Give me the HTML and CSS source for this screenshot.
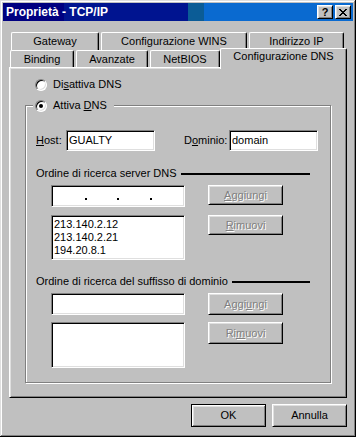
FILE: index.html
```html
<!DOCTYPE html>
<html lang="it">
<head>
  <meta charset="UTF-8">
  <title>Proprietà - TCP/IP</title>
  <link rel="stylesheet" href="styles.css">
</head>
<body>
  <div class="window">
    <div class="titlebar">
      <span class="title">Proprietà - TCP/IP</span>
      <div class="title-buttons">
        <div class="tbtn help">?</div>
        <div class="tbtn">
          <svg width="8" height="7" viewBox="0 0 8 7" shape-rendering="crispEdges">
            <path d="M0 0h2v1h-2zM6 0h2v1h-2zM1 1h2v1h-2zM5 1h2v1h-2zM2 2h4v1h-4zM3 3h2v1h-2zM2 4h4v1h-4zM1 5h2v1h-2zM5 5h2v1h-2zM0 6h2v1h-2zM6 6h2v1h-2z" fill="#000"/>
          </svg>
        </div>
      </div>
    </div>

    <div class="tabs">
      <div class="tabrow back">
        <div class="tab t-gateway">Gateway</div>
        <div class="tab t-wins">Configurazione WINS</div>
        <div class="tab t-ip">Indirizzo IP</div>
      </div>
      <div class="tabrow front">
        <div class="tab t-binding">Binding</div>
        <div class="tab t-avanzate">Avanzate</div>
        <div class="tab t-netbios">NetBIOS</div>
        <div class="tab t-dns active">Configurazione DNS</div>
      </div>
    </div>

    <div class="panel">
      <div class="radio-line">
        <span class="radio"></span>
        <span>Di<u>s</u>attiva DNS</span>
      </div>

      <fieldset class="group">
        <legend class="radio-line legend">
          <span class="radio checked"></span>
          <span>Attiva <u>D</u>NS</span>
        </legend>

        <div class="host-row">
          <label class="lbl-host"><u>H</u>ost:</label>
          <div class="field">GUALTY</div>
          <label class="lbl-dom">D<u>o</u>minio:</label>
          <div class="field">domain</div>
        </div>

        <div class="section">
          <span>Ordine di ricerca server DNS</span>
          <span class="rule"></span>
        </div>
        <div class="list-block">
          <div class="list-col">
            <div class="field ip">
              <span class="seg"></span><span class="dot"></span>
              <span class="seg"></span><span class="dot"></span>
              <span class="seg"></span><span class="dot"></span>
              <span class="seg"></span>
            </div>
            <div class="field listbox">
              <div>213.140.2.12</div>
              <div>213.140.2.21</div>
              <div>194.20.8.1</div>
            </div>
          </div>
          <div class="btn-col">
            <div class="btn disabled"><span><u>A</u>ggiungi</span></div>
            <div class="btn disabled gap"><span><u>R</u>imuovi</span></div>
          </div>
        </div>

        <div class="section second">
          <span>Ordine di ricerca del suffisso di dominio</span>
          <span class="rule"></span>
        </div>
        <div class="list-block">
          <div class="list-col">
            <div class="field wide"></div>
            <div class="field listbox tall"></div>
          </div>
          <div class="btn-col">
            <div class="btn disabled wide"><span>Aggi<u>u</u>ngi</span></div>
            <div class="btn disabled wide gap2"><span>Ri<u>m</u>uovi</span></div>
          </div>
        </div>
      </fieldset>
    </div>

    <div class="footer">
      <div class="btn default">OK</div>
      <div class="btn">Annulla</div>
    </div>
  </div>
</body>
</html>
```

FILE: styles.css
```css
* {
  box-sizing: border-box;
}
body {
  margin: 0;
  font-family: "Liberation Sans", Arial, sans-serif;
  font-size: 11px;
  line-height: 13px;
  color: #000;
  background: #c0c0c0;
}
.window {
  width: 356px;
  height: 437px;
  padding: 3px;
  background: #c0c0c0;
  box-shadow: inset -1px -1px #000, inset 1px 1px #dfdfdf, inset -2px -2px #808080, inset 2px 2px #fff;
  display: flex;
  flex-direction: column;
}

/* title bar */
.titlebar {
  height: 18px;
  display: flex;
  align-items: center;
  justify-content: space-between;
  padding: 0 2px 0 3px;
  background: linear-gradient(to right, #000080 0, #000080 61px, #001490 61px, #001490 185px, #0b5c96 185px, #0b5c96 201px, #0a6ad0 201px);
}
.title {
  color: #fff;
  font-weight: bold;
  font-size: 12px;
}
.title-buttons {
  display: flex;
  gap: 2px;
}
.tbtn {
  width: 16px;
  height: 14px;
  background: #c0c0c0;
  border: 1px solid;
  border-color: #fff #000 #000 #fff;
  box-shadow: inset 1px 1px #dfdfdf, inset -1px -1px #808080;
  display: flex;
  align-items: center;
  justify-content: center;
}
.tbtn.help {
  font-weight: bold;
  font-size: 11px;
  line-height: 11px;
}

/* tabs */
.tabs {
  margin: 11px 6px 0;
}
.tabrow {
  display: flex;
  gap: 2px;
}
.tabrow.back {
  padding-left: 2px;
}
.tabrow.front {
  padding-left: 1px;
}
.tab {
  background: #c0c0c0;
  border-top: 1px solid #fff;
  border-left: 1px solid #fff;
  border-right: 1px solid #000;
  border-radius: 2px 2px 0 0;
  box-shadow: inset -1px 0 #808080;
  text-align: center;
  padding-top: 2px;
}
.back .tab {
  height: 18px;
}
.front .tab {
  height: 17px;
}
.t-gateway { width: 88px; }
.t-wins { width: 146px; }
.t-ip { width: 95px; }
.t-binding { width: 64px; }
.t-avanzate { width: 72px; }
.t-netbios { width: 70px; }
.t-dns { width: 127px; }
.tab.active {
  height: 21px;
  margin: -2px 0 -2px -2px;
  padding-top: 1px;
  position: relative;
  z-index: 1;
}

/* panel */
.panel {
  height: 331px;
  margin: 0 6px;
  border: 1px solid;
  border-color: #fff #000 #000 #fff;
  box-shadow: inset 1px 1px #dfdfdf, inset -1px -1px #808080;
  padding: 10px 15px 0 15px;
}
.radio-line {
  display: flex;
  align-items: center;
  gap: 6px;
  height: 13px;
  margin-left: 10px;
}
.radio {
  width: 12px;
  height: 12px;
  border-radius: 50%;
  background: #fff;
  border: 1px solid;
  border-color: #808080 #fff #fff #808080;
  box-shadow: inset 1px 1px #000, inset -1px -1px #dfdfdf;
  display: flex;
  align-items: center;
  justify-content: center;
}
.radio.checked::after {
  content: "";
  width: 4px;
  height: 4px;
  border-radius: 50%;
  background: #000;
}
.group {
  margin: 8px 0 0;
  padding: 0 10px 14px;
  border: 1px solid #808080;
  box-shadow: inset 1px 1px #fff, 1px 1px #fff;
  min-width: 0;
}
.legend {
  margin-left: -3px;
  padding: 0 7px 0 2px;
  background: #c0c0c0;
  display: flex;
}
.host-row {
  display: flex;
  align-items: center;
  margin-top: 18px;
}
.lbl-host {
  width: 30px;
}
.lbl-dom {
  width: 45px;
  margin-left: 29px;
}
.field {
  width: 89px;
  height: 21px;
  background: #fff;
  border: 1px solid;
  border-color: #808080 #fff #fff #808080;
  box-shadow: inset 1px 1px #000, inset -1px -1px #dfdfdf;
  padding: 3px 2px;
}
.section {
  display: flex;
  align-items: center;
  margin-top: 16px;
  padding-right: 10px;
}
.section.second {
  margin-top: 15px;
}
.rule {
  flex: 1;
  height: 2px;
  background: #000;
  margin-left: 4px;
}
.list-block {
  display: flex;
  margin-top: 5px;
  margin-left: 15px;
}
.list-col {
  width: 134px;
}
.field.ip {
  width: 134px;
  height: 22px;
  padding: 0 2px;
  display: flex;
  align-items: center;
}
.seg {
  flex: 1;
}
.dot {
  width: 2px;
  height: 2px;
  background: #000;
  margin-top: 5px;
}
.field.wide {
  width: 134px;
  height: 22px;
}
.listbox {
  width: 134px;
  height: 45px;
  margin-top: 8px;
  padding: 2px 2px;
}
.listbox.tall {
  height: 46px;
  margin-top: 7px;
}
.btn-col {
  margin-left: 23px;
}
.btn {
  width: 75px;
  height: 20px;
  background: #c0c0c0;
  border: 1px solid;
  border-color: #fff #000 #000 #fff;
  box-shadow: inset 1px 1px #dfdfdf, inset -1px -1px #808080;
  display: flex;
  align-items: center;
  justify-content: center;
}
.btn.wide {
  height: 22px;
}
.btn.gap {
  margin-top: 10px;
}
.btn.gap2 {
  margin-top: 7px;
}
.btn.disabled {
  color: #808080;
  text-shadow: 1px 1px #fff;
}

/* footer */
.footer {
  display: flex;
  justify-content: flex-end;
  gap: 6px;
  margin-top: 6px;
  padding-right: 6px;
}
.footer .btn {
  height: 23px;
}
.btn.default {
  border-color: #000;
  box-shadow: inset 1px 1px #fff, inset -1px -1px #808080, inset 2px 2px #dfdfdf;
}
```
